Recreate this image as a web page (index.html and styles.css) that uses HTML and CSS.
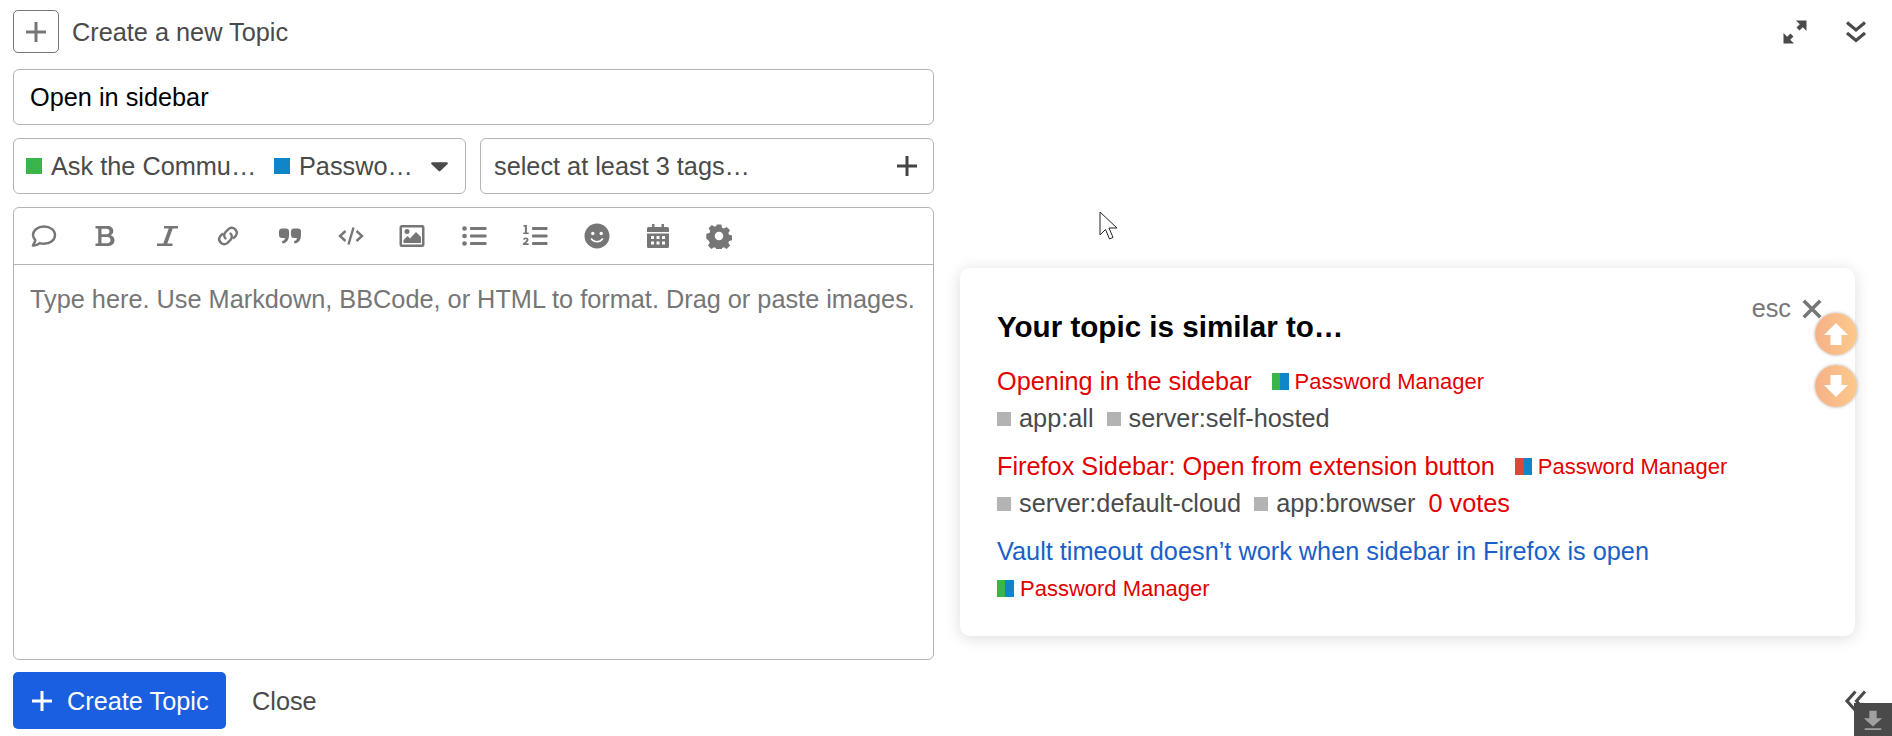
FILE: index.html
```html
<!DOCTYPE html>
<html lang="en">
<head>
<meta charset="utf-8">
<title>Create a new Topic</title>
<link rel="stylesheet" href="styles.css">
</head>
<body>
<div class="page">
  <main class="composer">
    <header class="head">
      <button class="add-box"><svg class="i18" viewBox="0 0 24 24"><path d="M12 2v20M2 12h20" stroke="#767676" stroke-width="3" fill="none"/></svg></button>
      <span class="head-title">Create a new Topic</span>
    </header>
    <div class="field title-field">Open in sidebar</div>
    <div class="selectors">
      <div class="field sel cat-sel">
        <span class="sq green"></span><span class="cat-a">Ask the Commu…</span>
        <span class="sq blue"></span><span class="cat-b">Passwo…</span>
        <svg class="caret" viewBox="0 0 16 10"><path d="M1 1h14a1 1 0 0 1 .7 1.600L8.700 9.300a1 1 0 0 1-1.400 0L.3 2.600A1 1 0 0 1 1 1z" fill="#4a4a4a"/></svg>
      </div>
      <div class="field sel tag-sel">
        <span>select at least 3 tags…</span>
        <svg class="i20" viewBox="0 0 22 22"><path d="M11 1v20M1 11h20" stroke="#444" stroke-width="3" fill="none"/></svg>
      </div>
    </div>
    <section class="editor">
      <div class="toolbar">
        <svg class="ti" viewBox="0 0 26 26"><path d="M13 3.500C6.800 3.500 2 7.300 2 12c0 2 .9 3.800 2.300 5.200C3.900 19.600 2 21.600 2 22.500c3 .2 5.300-1 6.800-2.300 1.300.4 2.700.6 4.200.6 6.200 0 11-3.800 11-8.800S19.200 3.500 13 3.500z" fill="none" stroke="#767676" stroke-width="2.400"/></svg>
        <svg class="ti" viewBox="0 0 26 26"><path d="M3.500 3h12c3.600 0 5.800 2 5.800 5 0 2-1 3.500-2.700 4.200 2.400.7 3.900 2.500 3.900 4.900 0 3.500-2.500 5.900-6 5.900h-13v-2.600h2.700V5.600H3.500zM9.500 5.800v5.400h5c1.800 0 2.900-1 2.900-2.700s-1.100-2.700-2.900-2.700zM9.500 14v6.200h5.800c2 0 3.200-1.200 3.200-3.100S17.300 14 15.300 14z" fill="#767676" fill-rule="evenodd"/></svg>
        <svg class="ti" viewBox="0 0 26 26"><path d="M10 3h14v2.400h-5.300L13.300 20.600H18.500V23H3v-2.400h6.300L14.700 5.400H10z" fill="#767676"/></svg>
        <svg class="ti" viewBox="0 0 26 26"><g fill="none" stroke="#767676" stroke-width="2.400" stroke-linecap="round"><path d="M10.500 15.500a4.500 4.500 0 0 1 0-6.400l3.200-3.200a5 5 0 0 1 7 7l-2 2"/><path d="M15.500 10.500a4.500 4.500 0 0 1 0 6.400l-3.200 3.200a5 5 0 0 1-7-7l2-2"/></g></svg>
        <svg class="ti" viewBox="0 0 26 26"><path d="M2 8.500a3 3 0 0 1 3-3h4a3 3 0 0 1 3 3v4c0 4.500-2.600 7.500-6.500 8l-.6-2.300c2-.5 3-1.700 3.100-3.200H5a3 3 0 0 1-3-3zM14 8.500a3 3 0 0 1 3-3h4a3 3 0 0 1 3 3v4c0 4.500-2.600 7.500-6.500 8l-.6-2.300c2-.5 3-1.700 3.100-3.200H17a3 3 0 0 1-3-3z" fill="#767676"/></svg>
        <svg class="ti" viewBox="0 0 26 26"><g fill="none" stroke="#767676" stroke-width="2.400"><path d="M7.500 8L2 13l5.500 5M18.500 8L24 13l-5.500 5"/><path d="M15.500 4.500l-5 17"/></g></svg>
        <svg class="ti" viewBox="0 0 26 26"><path d="M3 2h20a2.500 2.500 0 0 1 2.500 2.500v17A2.500 2.500 0 0 1 23 24H3a2.500 2.500 0 0 1-2.500-2.500v-17A2.500 2.500 0 0 1 3 2zm0 2.500v17h20v-17z" fill="#767676" fill-rule="evenodd"/><circle cx="8" cy="8.500" r="2.500" fill="#767676"/><path d="M4.500 20v-3l4-4 2.500 2.500 6-6.500 5 5v6z" fill="#767676"/></svg>
        <svg class="ti" viewBox="0 0 26 26"><g fill="#767676"><circle cx="3.500" cy="5.500" r="2.300"/><circle cx="3.500" cy="13" r="2.300"/><circle cx="3.500" cy="20.500" r="2.300"/><rect x="9" y="4" width="16.500" height="3" rx=".8"/><rect x="9" y="11.500" width="16.500" height="3" rx=".8"/><rect x="9" y="19" width="16.500" height="3" rx=".8"/></g></svg>
        <svg class="ti" viewBox="0 0 26 26"><g fill="#767676"><rect x="10" y="4" width="15.500" height="3" rx=".8"/><rect x="10" y="11.500" width="15.500" height="3" rx=".8"/><rect x="10" y="19" width="15.500" height="3" rx=".8"/><path d="M1.500 2h3.400v7.500h1.800V11H1.300V9.500h1.600V3.700H1.500zM1 16.500c.3-1.300 1.300-2 2.800-2 1.600 0 2.700.9 2.700 2.300 0 1.200-.8 2-2.700 3.500h2.800V22H.8v-1.400c2.700-2.200 3.800-3 3.800-3.800 0-.6-.4-.9-1-.9s-1 .3-1.100 1z"/></g></svg>
        <svg class="ti" viewBox="0 0 26 26"><circle cx="13" cy="13" r="12.500" fill="#767676"/><circle cx="8.800" cy="10.500" r="1.700" fill="#fff"/><circle cx="17.200" cy="10.500" r="1.700" fill="#fff"/><path d="M7.500 16c1.300 1.800 3.300 2.700 5.500 2.700s4.200-.9 5.500-2.700" fill="none" stroke="#fff" stroke-width="1.600" stroke-linecap="round"/></svg>
        <svg class="ti" viewBox="0 0 26 26"><path d="M7 1h2.500v3h7V1H19v3h3.500A1.500 1.500 0 0 1 24 5.500V9H2V5.500A1.500 1.500 0 0 1 3.500 4H7zM2 10.500h22v13a1.500 1.500 0 0 1-1.500 1.500h-19A1.500 1.500 0 0 1 2 23.500zM6 13v3h3v-3zm5.500 0v3h3v-3zm5.500 0v3h3v-3zM6 18.500v3h3v-3zm5.500 0v3h3v-3zm5.500 0v3h3v-3z" fill="#767676" fill-rule="evenodd"/></svg>
        <svg class="ti" viewBox="0 0 26 26"><path d="M10.500 1h5l.7 3.300 2 .9 2.900-1.800 3.500 3.500-1.800 2.900.8 2 3.400.7v5l-3.400.7-.8 2 1.800 2.900-3.500 3.500-2.900-1.800-2 .8-.7 3.400h-5l-.7-3.400-2-.8-2.900 1.800-3.500-3.500 1.800-2.900-.8-2L-.4 15.500v-5l3.400-.7.800-2L2 4.900l3.500-3.500 2.900 1.800 2-.9zM13 8.500a4.500 4.500 0 1 0 0 9 4.500 4.500 0 0 0 0-9z" fill="#767676" fill-rule="evenodd" transform="translate(.65 .65) scale(.95)"/></svg>
      </div>
      <div class="editor-body">Type here. Use Markdown, BBCode, or HTML to format. Drag or paste images.</div>
    </section>
    <footer class="actions">
      <button class="primary"><svg class="i20" viewBox="0 0 22 22"><path d="M11 1v20M1 11h20" stroke="#fff" stroke-width="3" fill="none"/></svg><span class="nudge">Create Topic</span></button>
      <button class="close-btn"><span class="nudge">Close</span></button>
    </footer>
  </main>
  <aside class="side">
    <div class="window-tools">
      <svg class="wt" viewBox="0 0 24 24"><path d="M23.500.5v10.500l-3.700-3.700-3.300 3.300-3-3 3.300-3.300L13 .5zM.5 23.500V13l3.700 3.700 3.300-3.300 3 3-3.300 3.300 3.800 3.800z" fill="#4a4a4a"/></svg>
      <svg class="wt" viewBox="0 0 24 24"><path d="M3 2.500L12 10l9-7.500M3 13L12 20.500 21 13" fill="none" stroke="#4a4a4a" stroke-width="3.100"/></svg>
    </div>
    <section class="popup">
      <div class="esc"><span>esc</span><svg class="x" viewBox="0 0 20 20"><path d="M2.500 2.500l15 15M17.500 2.500l-15 15" stroke="#767676" stroke-width="3.200" fill="none"/></svg></div>
      <h2>Your topic is similar to…</h2>
      <ul class="results">
        <li>
          <div class="row"><a class="rt red">Opening in the sidebar</a><span class="cat"><i class="dual gb"></i>Password Manager</span></div>
          <div class="row tags"><span class="tag"><i></i>app:all</span><span class="tag"><i></i>server:self-hosted</span></div>
        </li>
        <li>
          <div class="row"><a class="rt red">Firefox Sidebar: Open from extension button</a><span class="cat"><i class="dual rb"></i>Password Manager</span></div>
          <div class="row tags"><span class="tag"><i></i>server:default-cloud</span><span class="tag"><i></i>app:browser</span><span class="votes">0 votes</span></div>
        </li>
        <li>
          <div class="row"><a class="rt blue-t">Vault timeout doesn’t work when sidebar in Firefox is open</a></div>
          <div class="row"><span class="cat nomargin"><i class="dual gb"></i>Password Manager</span></div>
        </li>
      </ul>
    </section>
    <div class="bottom-tools">
      <svg class="wt" viewBox="0 0 24 24"><path d="M11.500 2.500L3 12l8.500 9.500M21 2.500L12.500 12 21 21.500" fill="none" stroke="#4a4a4a" stroke-width="3.100"/></svg>
    </div>
  </aside>
</div>
<svg class="cursor" viewBox="0 0 20 30"><path d="M1 1v23l5.500-5.500 4 9.500 3.500-1.600-4-9.400h8z" fill="#fff" stroke="#222" stroke-width="1"/></svg>
<div class="scroll-btn up"><svg viewBox="0 0 30 30"><path d="M15 4L27 16h-6.500v10h-11V16H3z" fill="#fff"/></svg></div>
<div class="scroll-btn down"><svg viewBox="0 0 30 30"><path d="M15 26L27 14h-6.500V4h-11v10H3z" fill="#fff"/></svg></div>
<div class="dl-box"><svg viewBox="0 0 24 24"><path d="M8 2h8v8h6l-10 9L2 10h6zM3 21h18v2H3z" fill="#a0a0a0"/></svg></div>
</body>
</html>
```
FILE: styles.css
```css
* { box-sizing: border-box; }
html, body { margin: 0; height: 736px; overflow: hidden; background: #fff; }
body { font-family: "Liberation Sans", Arial, sans-serif; font-size: 25.300px; color: #4a4a4a; position: relative; }
button { font: inherit; cursor: pointer; }
.page { display: flex; height: 736px; padding: 10px 0 7px 13px; }
.composer { width: 921px; flex: none; display: flex; flex-direction: column; }
.head { display: flex; align-items: center; height: 43px; gap: 13px; }
.head-title { padding-top: 2px; }
.add-box { width: 46px; height: 43px; border: 1px solid #767676; border-radius: 5px; background: #fff; display: flex; align-items: center; justify-content: center; padding: 0; }
.i18 { width: 24px; height: 24px; }
.i20 { width: 22px; height: 22px; flex: none; }
.field { border: 1px solid #b3b3b3; border-radius: 6px; background: #fff; }
.title-field { margin-top: 16px; height: 56px; display: flex; align-items: center; padding: 0 16px; color: #000; }
.selectors { display: flex; gap: 14px; margin-top: 13px; }
.sel { height: 56px; min-width: 0; display: flex; align-items: center; white-space: nowrap; }
.cat-sel { flex: 0 0 453px; padding: 0 17px 0 12px; }
.tag-sel { flex: 1 1 0; padding: 0 15px 0 13px; justify-content: space-between; }
.sq { width: 16px; height: 16px; flex: none; margin-right: 9px; }
.green { background: #39b54a; }
.blue { background: #0e86c9; }
.cat-a { width: 223px; flex: none; }
.cat-b { flex: 1; }
.caret { width: 17px; height: 11px; flex: none; }
.editor { margin-top: 13px; flex: 1; border: 1px solid #b3b3b3; border-radius: 6px; display: flex; flex-direction: column; }
.toolbar { height: 57px; flex: none; border-bottom: 1px solid #b3b3b3; display: flex; align-items: center; gap: 35.400px; padding: 0 17px; }
.ti { width: 26px; height: 26px; flex: none; }
.editor-body { padding: 20px 16px; color: #767676; white-space: nowrap; }
.actions { display: flex; align-items: center; margin-top: 12px; gap: 26px; }
.nudge { padding-top: 2px; }
.primary { height: 57px; width: 213px; border: 0; border-radius: 5px; background: #1a5fdf; color: #fff; display: flex; align-items: center; gap: 14px; padding: 0 0 0 18px; }
.close-btn { border: 0; background: none; padding: 0; color: #4a4a4a; display: flex; }
.side { flex: 1; display: flex; flex-direction: column; padding: 0 24px 0 26px; min-width: 0; }
.window-tools { display: flex; justify-content: flex-end; gap: 37px; height: 43px; align-items: center; }
.wt { width: 24px; height: 24px; }
.popup { position: relative; margin-top: 215px; height: 368px; width: 895px; border-radius: 10px; background: #fff; box-shadow: 0 2px 16px rgba(0,0,0,.14); padding: 43px 37px 0; }
.popup h2 { margin: 0; font-size: 29.600px; line-height: 32px; font-weight: 700; color: #000; }
.esc { position: absolute; right: 32px; top: 26px; display: flex; align-items: center; gap: 10px; color: #767676; }
.x { width: 22px; height: 22px; }
.results { list-style: none; margin: 20px 0 0; padding: 0; }
.results li { margin-bottom: 11px; }
.row { display: flex; align-items: center; height: 37px; white-space: nowrap; }
.red { color: #e20000; }
.blue-t { color: #1a5fc8; }
.cat { font-size: 22px; color: #e20000; display: inline-flex; align-items: center; margin-left: 20px; }
.nomargin { margin-left: 0; }
.dual { width: 17px; height: 17px; margin-right: 6px; }
.gb { background: linear-gradient(90deg, #39b54a 50%, #0e86c9 50%); }
.rb { background: linear-gradient(90deg, #d9493a 50%, #0e86c9 50%); }
.tag { display: inline-flex; align-items: center; margin-right: 13px; }
.tag i { width: 14px; height: 14px; background: #b3b3b3; margin-right: 8px; }
.votes { color: #e20000; }
.bottom-tools { margin-top: 53px; display: flex; justify-content: flex-end; }
.cursor { position: absolute; left: 1099px; top: 211px; width: 20px; height: 30px; }
.scroll-btn { position: absolute; left: 1815px; width: 42px; height: 42px; border-radius: 50%; background: linear-gradient(90deg, #f5ab7e, #fdc583); box-shadow: 0 0 3px rgba(120,120,120,.7); opacity: .92; display: flex; align-items: center; justify-content: center; }
.scroll-btn svg { width: 30px; height: 30px; }
.up { top: 313px; }
.down { top: 365px; }
.dl-box { position: absolute; left: 1854px; top: 703px; width: 38px; height: 33px; background: #4a4a4a; display: flex; align-items: center; justify-content: center; }
.dl-box svg { width: 22px; height: 22px; }
```
